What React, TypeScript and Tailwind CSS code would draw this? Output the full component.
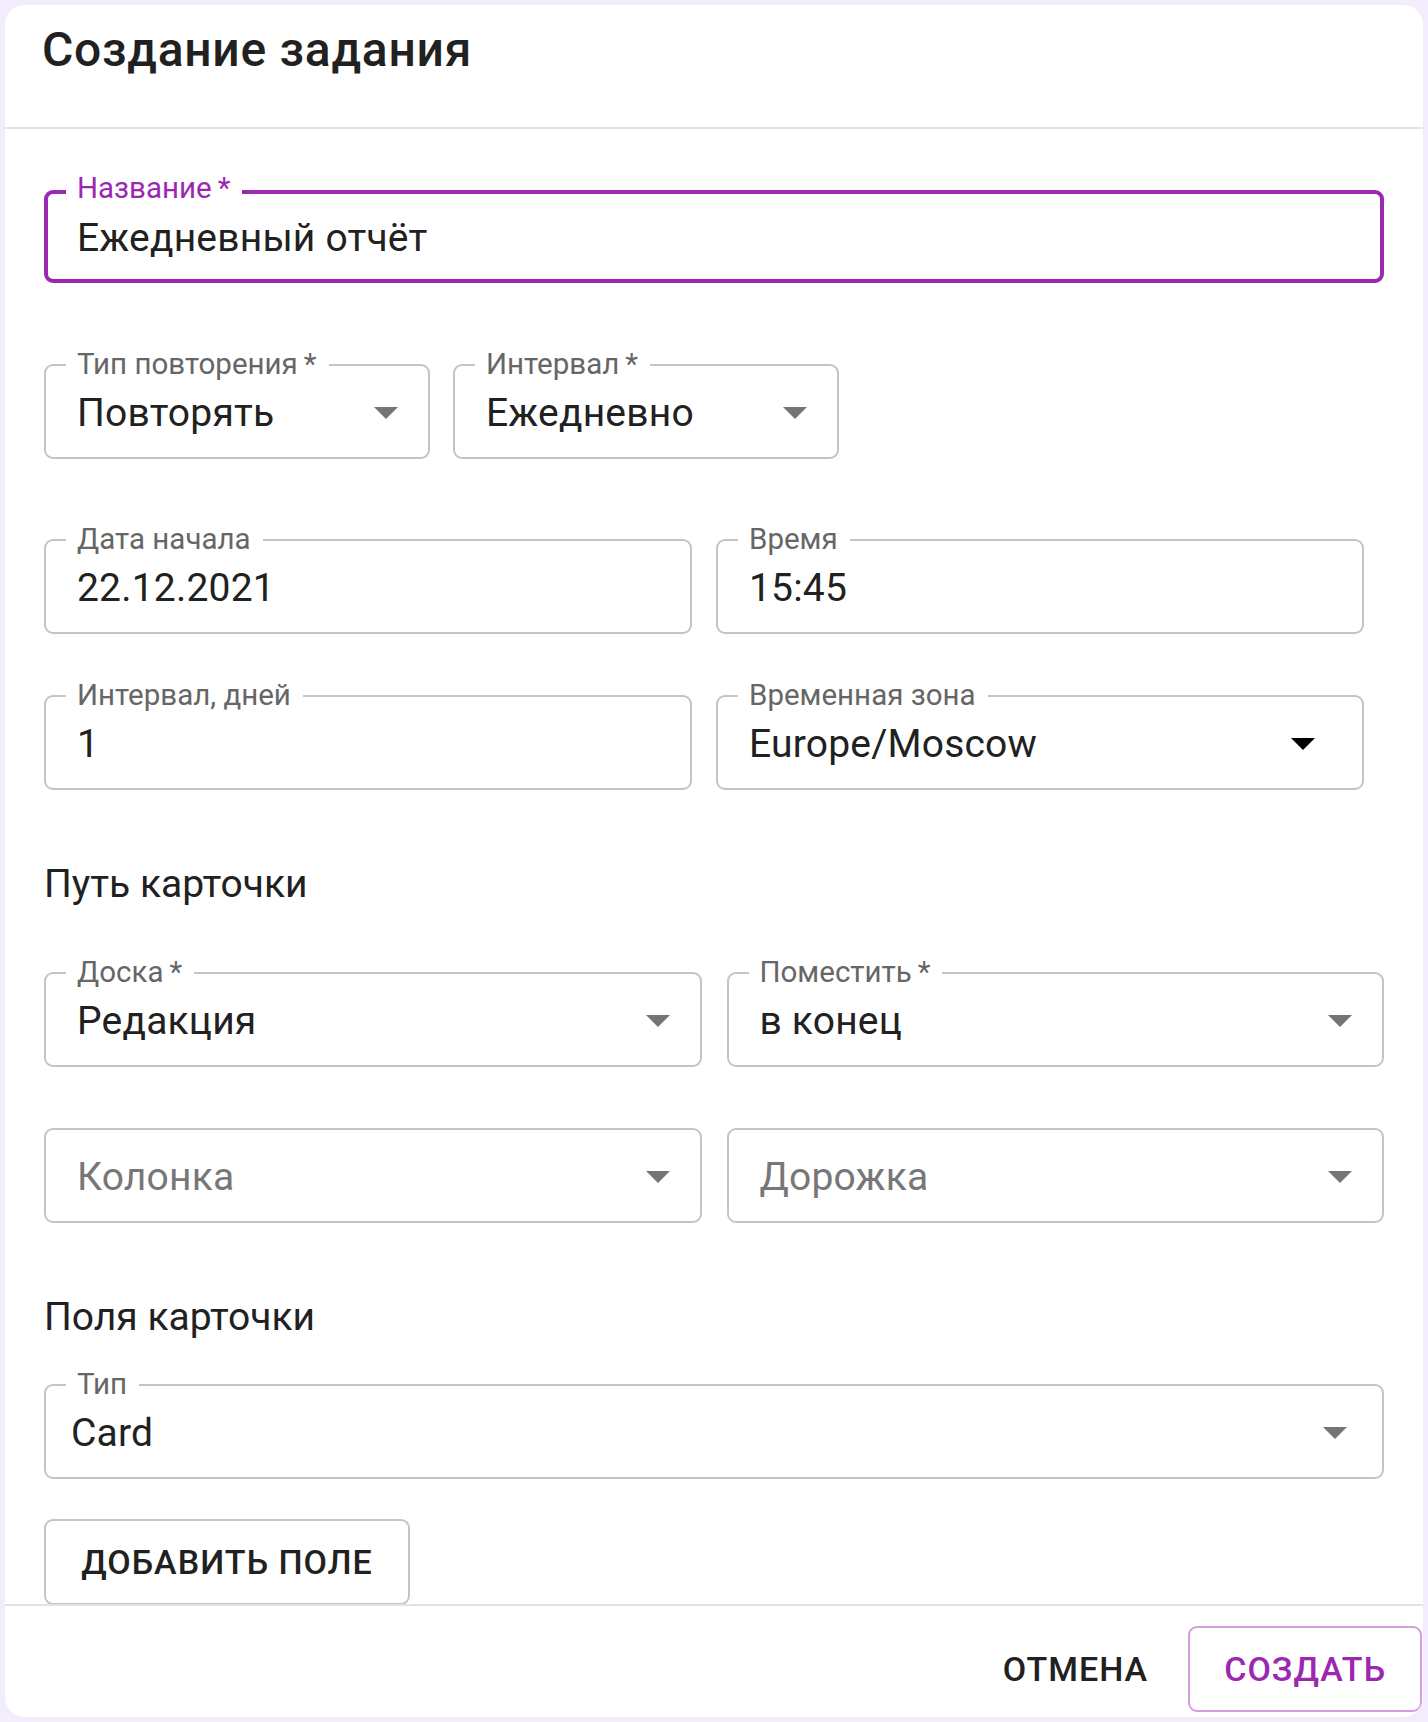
import type { ReactNode } from "react";

function Arrow({ dark }: { dark?: boolean }) {
	return (
		<svg
			width="24"
			height="12"
			viewBox="7 10 10 5"
			className={dark ? "shrink-0 fill-black" : "shrink-0 fill-[#757575]"}
			aria-hidden
		>
			<path d="M7 10l5 5 5-5z" />
		</svg>
	);
}

type FieldProps = {
	label?: string;
	children: ReactNode;
	select?: boolean;
	dark?: boolean;
	className?: string;
	padding?: string;
};

function Field({ label, children, select, dark, className = "", padding = "pl-[31px] pr-[30px]" }: FieldProps) {
	return (
		<div
			className={`relative flex h-[95px] items-center justify-between rounded-[9px] border-2 border-[#c4c4c4] pt-[3px] ${padding} ${className}`}
		>
			{label && (
				<span className="absolute left-[20px] top-[-17px] bg-white pl-[11px] pr-[12px] text-[29.5px] leading-[30px] text-[#666]">
					{label}
				</span>
			)}
			<span className="truncate text-[39px] leading-[46px] tracking-[0.005em]">{children}</span>
			{select && <Arrow dark={dark} />}
		</div>
	);
}

function SectionTitle({ children, className }: { children: ReactNode; className: string }) {
	return <h3 className={`text-[39px] leading-[46px] font-normal ${className}`}>{children}</h3>;
}

export default function App() {
	return (
		<div className="h-[1722px] w-[1428px] bg-[#f3ecfd] p-[5px] font-[family-name:Roboto,sans-serif] text-[#212121]">
			<div className="flex h-full flex-col overflow-hidden rounded-[20px] bg-white">
				<header className="h-[124px] shrink-0 border-b-2 border-[#e3e3e3] pl-[37px] pt-[17px]">
					<h2 className="text-[48px] leading-[56px] font-medium tracking-[0.015em]">Создание задания</h2>
				</header>

				<div className="flex-1 overflow-hidden px-[39px] pt-[61px]">
					<div className="relative flex h-[93px] items-center rounded-[9px] border-4 border-[#9c27b0] pl-[29px] pt-[2px]">
						<span className="absolute left-[18px] top-[-21px] bg-white pl-[11px] pr-[12px] text-[29.5px] leading-[30px] text-[#9c27b0]">
							Название&thinsp;*
						</span>
						<span className="text-[39px] leading-[46px] tracking-[0.005em]">Ежедневный отчёт</span>
					</div>

					<div className="mt-[81px] flex gap-[23px]">
						<Field label={"Тип повторения\u2009*"} select className="w-[386px]">
							Повторять
						</Field>
						<Field label={"Интервал\u2009*"} select className="w-[386px]">
							Ежедневно
						</Field>
					</div>

					<div className="mr-[20px] mt-[80px] grid grid-cols-2 gap-[24px]">
						<Field label="Дата начала">22.12.2021</Field>
						<Field label="Время">15:45</Field>
					</div>

					<div className="mr-[20px] mt-[61px] grid grid-cols-2 gap-[24px]">
						<Field label="Интервал, дней">1</Field>
						<Field label="Временная зона" select dark padding="pl-[31px] pr-[47px]">
							Europe/Moscow
						</Field>
					</div>

					<SectionTitle className="mt-[71px]">Путь карточки</SectionTitle>

					<div className="mt-[65px] grid grid-cols-2 gap-[25px]">
						<Field label={"Доска\u2009*"} select>
							Редакция
						</Field>
						<Field label={"Поместить\u2009*"} select>
							в конец
						</Field>
					</div>

					<div className="mt-[61px] grid grid-cols-2 gap-[25px]">
						<Field select>
							<span className="text-[#777]">Колонка</span>
						</Field>
						<Field select>
							<span className="text-[#777]">Дорожка</span>
						</Field>
					</div>

					<SectionTitle className="mt-[71px]">Поля карточки</SectionTitle>

					<Field label="Тип" select className="mt-[44px]" padding="pl-[25px] pr-[35px]">
						Card
					</Field>

					<button className="mt-[40px] h-[86px] w-[366px] rounded-[9px] border-2 border-[#c4c4c4] text-[34px] font-medium uppercase tracking-[0.03em]">
						Добавить поле
					</button>
				</div>

				<footer className="flex h-[113px] shrink-0 items-start justify-end gap-[21px] border-t-2 border-[#e3e3e3] pr-[1px] pt-[20px]">
					<button className="h-[86px] px-[19px] text-[34px] font-medium uppercase tracking-[0.03em]">
						Отмена
					</button>
					<button className="h-[86px] rounded-[9px] border-2 border-[#d49ddd] px-[34px] text-[34px] font-medium uppercase tracking-[0.03em] text-[#9c27b0]">
						Создать
					</button>
				</footer>
			</div>
		</div>
	);
}
